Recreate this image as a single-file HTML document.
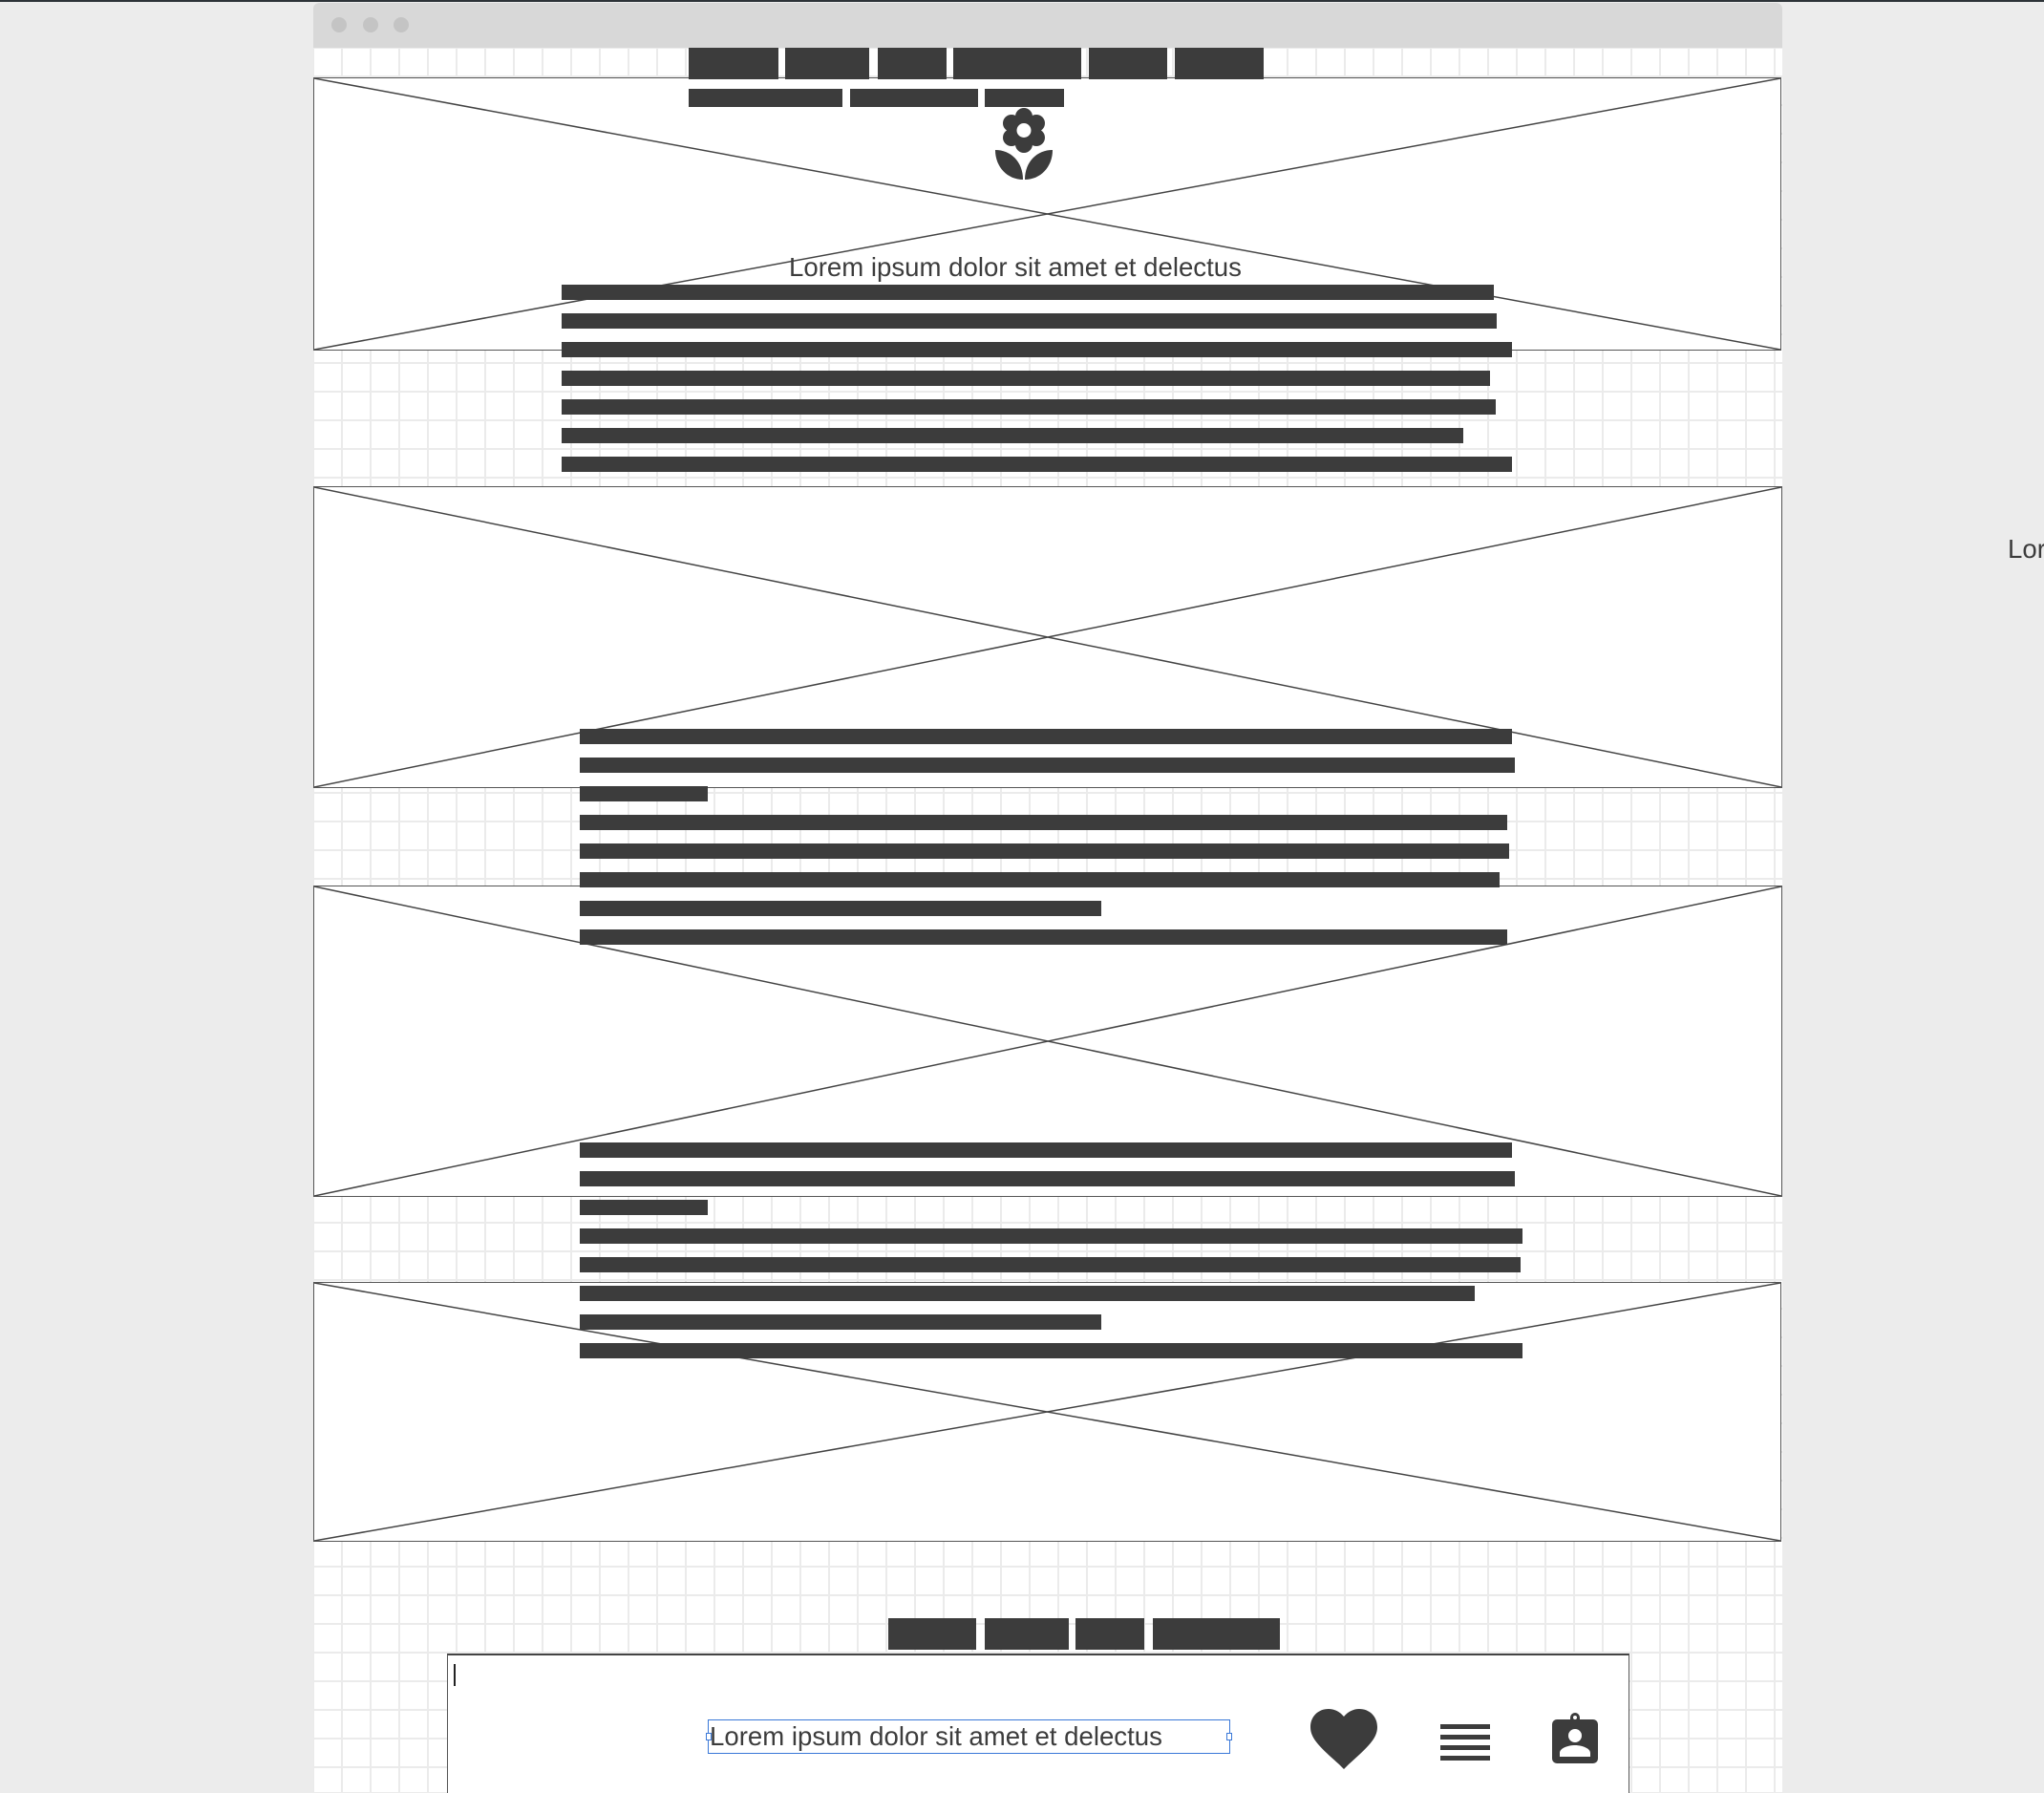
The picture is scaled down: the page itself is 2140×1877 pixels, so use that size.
<!DOCTYPE html>
<html><head><meta charset="utf-8"><style>
*{margin:0;padding:0;box-sizing:border-box}
html,body{width:2140px;height:1876px;overflow:hidden;background:#ececec;font-family:"Liberation Sans",sans-serif;color:#3c3c3c}
.abs{position:absolute}
.topline{left:0;top:0;width:2140px;height:2px;background:#2d3338}
.frame{left:328px;top:3px;width:1538px;height:1873px;background-color:#fff;
background-image:linear-gradient(#ebebeb 2px,transparent 2px),linear-gradient(90deg,#ebebeb 2px,transparent 2px);
background-size:30px 30px;background-position:0 16px,-1px 0;border-radius:6px 6px 0 0;overflow:hidden}
.bar{left:0;top:0;width:100%;height:47px;background:#d8d8d8}
.dot{width:16px;height:16px;border-radius:50%;background:#c4c4c4;top:15px}
.b{background:#3c3c3c;position:absolute}
.img{position:absolute;background:#fff;border:1px solid #555}
.img svg{position:absolute;left:0;top:0;width:100%;height:100%}
.txt{font-size:27.6px;white-space:nowrap;position:absolute}
</style></head><body>
<div class="abs topline"></div>
<div class="abs frame">
<div class="abs bar"></div>
<div class="abs dot" style="left:19px"></div>
<div class="abs dot" style="left:52px"></div>
<div class="abs dot" style="left:84px"></div>
</div>
<div class="img" style="left:328px;top:81px;width:1537px;height:286px"><svg viewBox="0 0 100 100" preserveAspectRatio="none"><path d="M0 0L100 100M100 0L0 100" stroke="#444" stroke-width="1.5" vector-effect="non-scaling-stroke" fill="none"/></svg></div>
<div class="img" style="left:328px;top:509px;width:1538px;height:316px"><svg viewBox="0 0 100 100" preserveAspectRatio="none"><path d="M0 0L100 100M100 0L0 100" stroke="#444" stroke-width="1.5" vector-effect="non-scaling-stroke" fill="none"/></svg></div>
<div class="img" style="left:328px;top:927px;width:1538px;height:326px"><svg viewBox="0 0 100 100" preserveAspectRatio="none"><path d="M0 0L100 100M100 0L0 100" stroke="#444" stroke-width="1.5" vector-effect="non-scaling-stroke" fill="none"/></svg></div>
<div class="img" style="left:328px;top:1342px;width:1537px;height:272px"><svg viewBox="0 0 100 100" preserveAspectRatio="none"><path d="M0 0L100 100M100 0L0 100" stroke="#444" stroke-width="1.5" vector-effect="non-scaling-stroke" fill="none"/></svg></div>

<div class="b" style="left:721px;top:50px;width:94px;height:33px"></div>
<div class="b" style="left:822px;top:50px;width:88px;height:33px"></div>
<div class="b" style="left:919px;top:50px;width:72px;height:33px"></div>
<div class="b" style="left:998px;top:50px;width:134px;height:33px"></div>
<div class="b" style="left:1140px;top:50px;width:82px;height:33px"></div>
<div class="b" style="left:1230px;top:50px;width:93px;height:33px"></div>
<div class="b" style="left:721px;top:93px;width:161px;height:19px"></div>
<div class="b" style="left:890px;top:93px;width:134px;height:19px"></div>
<div class="b" style="left:1031px;top:93px;width:83px;height:19px"></div>

<svg class="abs" style="left:1040px;top:113px" width="64" height="76" viewBox="0 0 64 76">
<g fill="#3c3c3c">
<circle cx="32" cy="9" r="9"/><circle cx="32" cy="38" r="9"/>
<circle cx="19" cy="16" r="9"/><circle cx="45" cy="16" r="9"/>
<circle cx="19" cy="31" r="9"/><circle cx="45" cy="31" r="9"/>
<circle cx="32" cy="23" r="11"/>
<path d="M2 44C18 44 31 56 31 75C15 75 2 62 2 44Z"/>
<path d="M62 44C46 44 33 56 33 75C49 75 62 62 62 44Z"/>
</g><circle cx="32" cy="23.5" r="7.5" fill="#fff"/></svg>

<div class="txt" style="left:826px;top:264px">Lorem ipsum dolor sit amet et delectus</div>

<div class="b" style="left:588px;top:298px;width:976px;height:16px"></div>
<div class="b" style="left:588px;top:328px;width:979px;height:16px"></div>
<div class="b" style="left:588px;top:358px;width:995px;height:16px"></div>
<div class="b" style="left:588px;top:388px;width:972px;height:16px"></div>
<div class="b" style="left:588px;top:418px;width:978px;height:16px"></div>
<div class="b" style="left:588px;top:448px;width:944px;height:16px"></div>
<div class="b" style="left:588px;top:478px;width:995px;height:16px"></div>

<div class="txt" style="left:2102px;top:559px">Lorem</div>

<div class="b" style="left:607px;top:763px;width:976px;height:16px"></div>
<div class="b" style="left:607px;top:793px;width:979px;height:16px"></div>
<div class="b" style="left:607px;top:823px;width:134px;height:16px"></div>
<div class="b" style="left:607px;top:853px;width:971px;height:16px"></div>
<div class="b" style="left:607px;top:883px;width:973px;height:16px"></div>
<div class="b" style="left:607px;top:913px;width:963px;height:16px"></div>
<div class="b" style="left:607px;top:943px;width:546px;height:16px"></div>
<div class="b" style="left:607px;top:973px;width:971px;height:16px"></div>

<div class="b" style="left:607px;top:1196px;width:976px;height:16px"></div>
<div class="b" style="left:607px;top:1226px;width:979px;height:16px"></div>
<div class="b" style="left:607px;top:1256px;width:134px;height:16px"></div>
<div class="b" style="left:607px;top:1286px;width:987px;height:16px"></div>
<div class="b" style="left:607px;top:1316px;width:985px;height:16px"></div>
<div class="b" style="left:607px;top:1346px;width:937px;height:16px"></div>
<div class="b" style="left:607px;top:1376px;width:546px;height:16px"></div>
<div class="b" style="left:607px;top:1406px;width:987px;height:16px"></div>

<div class="b" style="left:930px;top:1694px;width:92px;height:33px"></div>
<div class="b" style="left:1031px;top:1694px;width:88px;height:33px"></div>
<div class="b" style="left:1126px;top:1694px;width:72px;height:33px"></div>
<div class="b" style="left:1207px;top:1694px;width:133px;height:33px"></div>

<div class="abs" style="left:468px;top:1731px;width:1238px;height:146px;background:#fff;border:1px solid #555;border-top:2px solid #444;border-bottom:none"></div>
<div class="abs" style="left:475px;top:1742px;width:2px;height:23px;background:#222"></div>
<div class="abs" style="left:741px;top:1800px;width:547px;height:36px;border:1.5px solid #3a78d8"></div>
<div class="abs" style="left:739px;top:1814px;width:6px;height:8px;border:1px solid #3a78d8;background:#fff"></div>
<div class="abs" style="left:1284px;top:1814px;width:6px;height:8px;border:1px solid #3a78d8;background:#fff"></div>
<div class="txt" style="left:743px;top:1802px">Lorem ipsum dolor sit amet et delectus</div>

<svg class="abs" style="left:1372px;top:1789px" width="70" height="64" viewBox="0 0 70 64"><path fill="#3c3c3c" d="M35 63L30 58C10 40 0 31 0 19C0 8 8 0 19 0C25 0 31 3 35 8C39 3 45 0 51 0C62 0 70 8 70 19C70 31 60 40 40 58Z"/></svg>
<svg class="abs" style="left:1508px;top:1803px" width="52" height="42" viewBox="0 0 52 42"><g fill="#3c3c3c"><rect y="2" width="52" height="5"/><rect y="13" width="52" height="5"/><rect y="24" width="52" height="5"/><rect y="35" width="52" height="5"/></g></svg>
<svg class="abs" style="left:1625px;top:1793px" width="48" height="53" viewBox="0 0 48 53"><path fill="#3c3c3c" fill-rule="evenodd" d="M24 0a5 5 0 0 1 5 5v2h14a5 5 0 0 1 5 5v36a5 5 0 0 1-5 5H5a5 5 0 0 1-5-5V12a5 5 0 0 1 5-5h14V5a5 5 0 0 1 5-5zM24 3a2 2 0 1 0 0 4a2 2 0 1 0 0-4zM24 17a7 7 0 1 0 0 14a7 7 0 1 0 0-14zM8 46h32v-4c0-5-9-8-16-8s-16 3-16 8z"/></svg>
</body></html>
